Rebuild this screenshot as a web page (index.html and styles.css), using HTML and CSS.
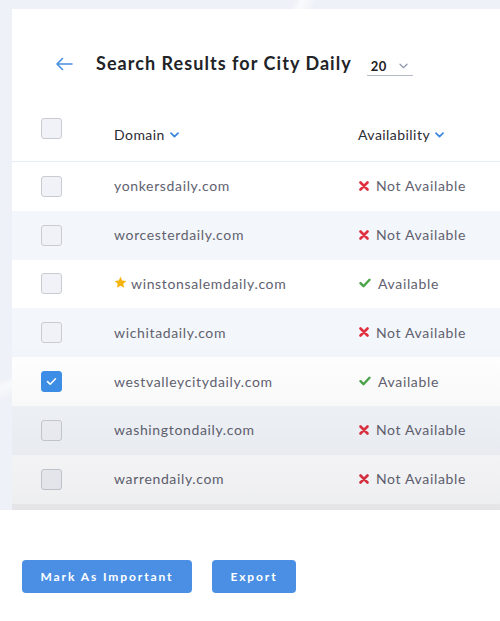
FILE: index.html
```html
<!DOCTYPE html>
<html>
<head>
<meta charset="utf-8">
<link rel="stylesheet" href="styles.css">
</head>
<body>
<div class="stage">
  <div class="card">
    <div class="title-row">
      <svg class="back" width="18" height="14" viewBox="0 0 18 14"><path d="M17 7H2M7.5 1.5L2 7l5.5 5.5" fill="none" stroke="#4a8fe0" stroke-width="1.6" stroke-linecap="round" stroke-linejoin="round"/></svg>
      <h1 class="title">Search Results for City Daily</h1>
      <div class="perpage"><span>20</span><svg width="9" height="6" viewBox="0 0 9 6"><path d="M1 1.2l3.5 3.4L8 1.2" fill="none" stroke="#8a94a6" stroke-width="1.2" stroke-linecap="round"/></svg></div>
    </div>
    <div class="table">
      <div class="row head">
        <div class="cell"><span class="cb"></span></div>
        <div class="cell th">Domain<svg class="chev" width="9" height="6" viewBox="0 0 9 6"><path d="M1 1.2l3.5 3.4L8 1.2" fill="none" stroke="#3b86e0" stroke-width="1.7" stroke-linecap="round" stroke-linejoin="round"/></svg></div>
        <div class="cell th">Availability<svg class="chev" width="9" height="6" viewBox="0 0 9 6"><path d="M1 1.2l3.5 3.4L8 1.2" fill="none" stroke="#3b86e0" stroke-width="1.7" stroke-linecap="round" stroke-linejoin="round"/></svg></div>
      </div>
      <div class="row">
        <div class="cell"><span class="cb"></span></div>
        <div class="cell dom">yonkersdaily.com</div>
        <div class="cell st"><svg class="x" width="10" height="10" viewBox="0 0 10 10"><path d="M1.5 1.5l7 7M8.5 1.5l-7 7" stroke="#e0303f" stroke-width="2.6" stroke-linecap="round"/></svg>Not Available</div>
      </div>
      <div class="row alt">
        <div class="cell"><span class="cb"></span></div>
        <div class="cell dom">worcesterdaily.com</div>
        <div class="cell st"><svg class="x" width="10" height="10" viewBox="0 0 10 10"><path d="M1.5 1.5l7 7M8.5 1.5l-7 7" stroke="#e0303f" stroke-width="2.6" stroke-linecap="round"/></svg>Not Available</div>
      </div>
      <div class="row">
        <div class="cell"><span class="cb"></span></div>
        <div class="cell dom"><svg class="star" width="13" height="13" viewBox="0 0 24 24"><path d="M12 1.5l3.2 7 7.5.8-5.6 5.1 1.6 7.5L12 18l-6.7 3.9 1.6-7.5L1.3 9.3l7.5-.8z" fill="#f6b30e"/></svg>winstonsalemdaily.com</div>
        <div class="cell st ok"><svg class="v" width="12" height="10" viewBox="0 0 12 10"><path d="M1.5 5.2l3 3L10.5 1.8" fill="none" stroke="#4aa548" stroke-width="2.4" stroke-linecap="round" stroke-linejoin="round"/></svg>Available</div>
      </div>
      <div class="row alt">
        <div class="cell"><span class="cb"></span></div>
        <div class="cell dom">wichitadaily.com</div>
        <div class="cell st"><svg class="x" width="10" height="10" viewBox="0 0 10 10"><path d="M1.5 1.5l7 7M8.5 1.5l-7 7" stroke="#e0303f" stroke-width="2.6" stroke-linecap="round"/></svg>Not Available</div>
      </div>
      <div class="row">
        <div class="cell"><span class="cb on"><svg width="11" height="9" viewBox="0 0 11 9"><path d="M1.5 4.6l2.7 2.6L9.5 1.8" fill="none" stroke="#fff" stroke-width="1.6" stroke-linecap="round" stroke-linejoin="round"/></svg></span></div>
        <div class="cell dom">westvalleycitydaily.com</div>
        <div class="cell st ok"><svg class="v" width="12" height="10" viewBox="0 0 12 10"><path d="M1.5 5.2l3 3L10.5 1.8" fill="none" stroke="#4aa548" stroke-width="2.4" stroke-linecap="round" stroke-linejoin="round"/></svg>Available</div>
      </div>
      <div class="row alt">
        <div class="cell"><span class="cb"></span></div>
        <div class="cell dom">washingtondaily.com</div>
        <div class="cell st"><svg class="x" width="10" height="10" viewBox="0 0 10 10"><path d="M1.5 1.5l7 7M8.5 1.5l-7 7" stroke="#e0303f" stroke-width="2.6" stroke-linecap="round"/></svg>Not Available</div>
      </div>
      <div class="row">
        <div class="cell"><span class="cb"></span></div>
        <div class="cell dom">warrendaily.com</div>
        <div class="cell st"><svg class="x" width="10" height="10" viewBox="0 0 10 10"><path d="M1.5 1.5l7 7M8.5 1.5l-7 7" stroke="#e0303f" stroke-width="2.6" stroke-linecap="round"/></svg>Not Available</div>
      </div>
      <div class="row tail"></div>
      <div class="shade"></div>
    </div>
  </div>
</div>
<div class="footer">
  <button class="btn">Mark As Important</button>
  <button class="btn">Export</button>
</div>
</body>
</html>
```
FILE: styles.css
```css
* { box-sizing: border-box; }
html, body { margin: 0; padding: 0; }
body {
  width: 500px;
  height: 621px;
  overflow: hidden;
  background: #fff;
  font-family: Lato, "Open Sans", sans-serif;
}
.stage {
  height: 510px;
  padding: 9px 0 0 12px;
  background:
    linear-gradient(115deg, transparent 40%, rgba(255,255,255,0.7) 41%, transparent 43%),
    linear-gradient(160deg, transparent 55%, rgba(255,255,255,0.6) 56%, transparent 58%),
    #eef1f7;
  overflow: hidden;
}
.card {
  background: #fff;
  height: 501px;
  padding-top: 42px;
  overflow: hidden;
}
.title-row {
  display: flex;
  align-items: center;
  height: 24px;
  padding-left: 43px;
}
.back { margin-right: 23px; margin-top: 1px; }
.title {
  margin: 0;
  font-size: 18px;
  font-weight: 700;
  color: #222327;
  letter-spacing: 1.05px;
}
.perpage {
  margin-left: 15px;
  margin-top: 6px;
  width: 46px;
  height: 19px;
  border-bottom: 1px solid #b5bcc8;
  display: flex;
  align-items: center;
  gap: 12px;
  padding-left: 4px;
  font-size: 13px;
  font-weight: 700;
  color: #222;
  letter-spacing: 0.5px;
}
.table {
  position: relative;
  margin-top: 35px;
}
.row {
  display: grid;
  grid-template-columns: 73px 244px 1fr;
  align-items: center;
  height: 48.8px;
  padding-left: 29px;
  background: #fff;
}
.row.alt { background: #f3f6fa; }
.row.head {
  height: 52px;
  border-bottom: 1px solid #e7edf5;
}
.row.head .cb { margin-top: -15px; }
.row.tail { height: 8px; background: #f5f5f5; }
.cell { display: flex; align-items: center; }
.th {
  font-size: 14px;
  color: #2b2b33;
  letter-spacing: 0.45px;
  margin-top: -3px;
}
.chev { margin-left: 5px; margin-top: 1px; }
.cb {
  width: 21px;
  height: 21px;
  border: 1px solid #c9cbd1;
  border-radius: 3px;
  background: #f1f2f7;
  display: flex;
  align-items: center;
  justify-content: center;
}
.cb.on { background: #3d8fe8; border-color: #3d8fe8; }
.dom {
  font-size: 14px;
  color: #61616f;
  letter-spacing: 0.65px;
  margin-top: -1px;
}
.star { margin-right: 4px; margin-top: -1px; }
.st {
  font-size: 14px;
  color: #61616f;
  letter-spacing: 0.65px;
  padding-left: 1px;
  margin-top: -1px;
}
.x { margin-right: 7px; }
.v { margin-right: 7px; }
.shade {
  position: absolute;
  left: 0; right: 0; bottom: 0;
  height: 170px;
  background: linear-gradient(to bottom, rgba(30,35,60,0) 0%, rgba(30,35,60,0.03) 40%, rgba(30,35,60,0.08) 100%);
  pointer-events: none;
}
.footer {
  display: flex;
  gap: 20px;
  padding: 50px 0 0 22px;
}
.btn {
  height: 33px;
  border: 0;
  border-radius: 4px;
  background: #4a8fe3;
  color: #fff;
  font-family: Lato, sans-serif;
  font-size: 12px;
  font-weight: 700;
  letter-spacing: 1.9px;
  padding: 0;
}
.btn:first-child { width: 170px; }
.btn:last-child { width: 84px; }
```
